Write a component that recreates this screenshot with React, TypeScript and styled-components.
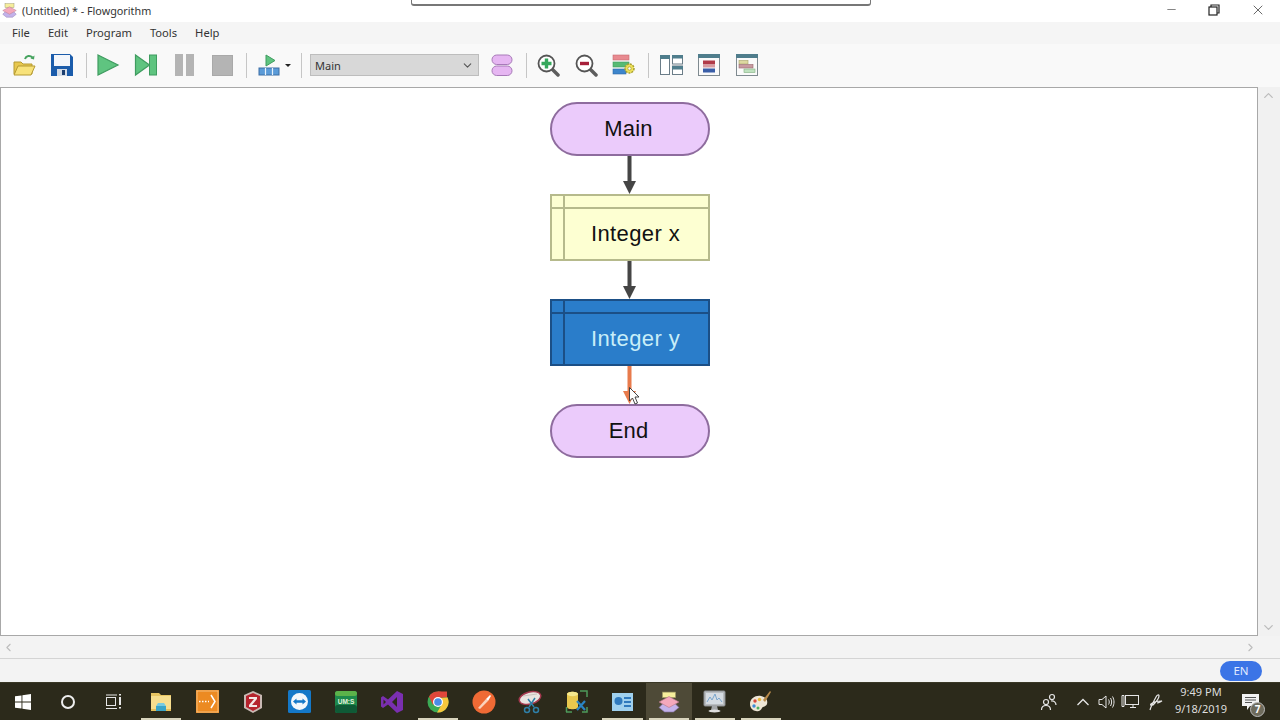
import React from "react";
import styled, { createGlobalStyle } from "styled-components";
import { ChevronDown, ChevronLeft, ChevronRight, ChevronUp, X, Minus } from "lucide-react";

const Global = createGlobalStyle`
    html, body {
        margin: 0;
        padding: 0;
        background: #fff;
    }
    * {
        box-sizing: border-box;
    }
`;

const Page = styled.div`
    position: relative;
    width: 1280px;
    height: 720px;
    overflow: hidden;
    display: flex;
    flex-direction: column;
    font-family: "Noto Sans", "Open Sans", sans-serif;
    color: #222;
`;

const TopOverlay = styled.div`
    position: absolute;
    top: -6px;
    left: 411px;
    width: 460px;
    height: 12px;
    background: #fff;
    border: 1px solid #777;
    border-bottom-width: 2px;
    border-radius: 3px;
`;

const TitleBar = styled.div`
    height: 22px;
    flex: none;
    display: flex;
    align-items: center;
    padding: 0 0 1px 2px;
    background: #fff;
`;

const TitleText = styled.span`
    margin-left: 5px;
    font-size: 10.8px;
    color: #333;
`;

const WindowControls = styled.div`
    margin-left: auto;
    display: flex;
    align-items: center;
    gap: 30px;
    padding: 0 14px 2px 0;
    color: #444;
`;

const MenuBar = styled.div`
    height: 22px;
    flex: none;
    display: flex;
    align-items: center;
    padding: 0 0 2px 12px;
    gap: 18px;
    background: #f5f5f5;
`;

const MenuItem = styled.span`
    font-size: 11.2px;
    color: #333;
`;

const Toolbar = styled.div`
    height: 43px;
    flex: none;
    display: flex;
    align-items: center;
    padding: 0 0 1px 5px;
    background: #f9f9f9;
`;

const ToolButton = styled.div<{ $w?: number }>`
    width: ${(p) => p.$w ?? 38}px;
    height: 24px;
    flex: none;
    display: flex;
    align-items: center;
    justify-content: center;
`;

const ToolSep = styled.div`
    width: 1px;
    height: 25px;
    flex: none;
    margin: 0 2px 0 5px;
    background: #c6c6c6;
`;

const Caret = styled.div`
    width: 6px;
    height: 0;
    flex: none;
    margin: 0 5px 0 -4px;
    border-left: 3px solid transparent;
    border-right: 3px solid transparent;
    border-top: 3px solid #222;
`;

const ProgramSelect = styled.div`
    width: 169px;
    height: 22px;
    flex: none;
    margin: 0 4px 0 6px;
    padding: 0 4px;
    display: flex;
    align-items: center;
    justify-content: space-between;
    background: #d8d8d8;
    border: 1px solid #bdbdbd;
    font-size: 11px;
    color: #333;
`;

const ViewGroup = styled.div`
    display: flex;
    margin-left: 1px;
`;

const Workspace = styled.div`
    height: 549px;
    flex: none;
    display: flex;
`;

const Canvas = styled.div`
    position: relative;
    flex: 1;
    background: #fff;
    border: 1px solid #a8a8a8;
    padding: 14px 0 0 549px;
`;

const Flow = styled.div`
    position: relative;
    width: 160px;
    display: flex;
    flex-direction: column;
`;

const Terminal = styled.div`
    height: 54px;
    display: flex;
    align-items: center;
    justify-content: center;
    padding-right: 3px;
    background: #ebcbfb;
    border: 2px solid #8e6c9e;
    border-radius: 27px;
    font-family: "Liberation Sans", Arial, sans-serif;
    font-size: 22px;
    letter-spacing: 0.2px;
    color: #111;
`;

const Declare = styled.div<{ $selected?: boolean }>`
    height: 67px;
    display: grid;
    grid-template-columns: 13px 1fr;
    grid-template-rows: 13px 1fr;
    background: ${(p) => (p.$selected ? "#2a7dca" : "#fdffd2")};
    border: 2px solid ${(p) => (p.$selected ? "#1b4f86" : "#b6ba8c")};
    color: ${(p) => (p.$selected ? "#c8eef8" : "#111")};
    --rule: ${(p) => (p.$selected ? "#1b4f86" : "#b6ba8c")};
    font-family: "Liberation Sans", Arial, sans-serif;
    font-size: 22px;
    letter-spacing: 0.4px;
`;

const DeclareCorner = styled.div`
    border-right: 2px solid var(--rule);
    border-bottom: 2px solid var(--rule);
`;

const DeclareTop = styled.div`
    border-bottom: 2px solid var(--rule);
`;

const DeclareSide = styled.div`
    border-right: 2px solid var(--rule);
`;

const DeclareLabel = styled.div`
    display: flex;
    align-items: center;
    justify-content: center;
    padding-right: 2px;
`;

const CursorMark = styled.svg`
    position: absolute;
    left: 79px;
    top: 285px;
`;

const VScroll = styled.div`
    width: 22px;
    flex: none;
    display: flex;
    flex-direction: column;
    justify-content: space-between;
    align-items: center;
    padding: 1px 1px 1px 0;
    background: #f1f1f1;
    color: #bcbcbc;
`;

const HScroll = styled.div`
    height: 23px;
    flex: none;
    display: flex;
    align-items: center;
    justify-content: space-between;
    padding: 0 23px 0 2px;
    background: #f3f3f3;
    border-bottom: 1px solid #d4d4d4;
    color: #bcbcbc;
`;

const StatusBar = styled.div`
    height: 23px;
    flex: none;
    display: flex;
    align-items: center;
    justify-content: flex-end;
    padding-right: 18px;
    background: #f3f3f3;
`;

const LangPill = styled.div`
    width: 42px;
    height: 20px;
    display: flex;
    align-items: center;
    justify-content: center;
    background: #3b74e6;
    border-radius: 10px;
    font-size: 11.5px;
    color: #e2ebff;
`;

const Taskbar = styled.div`
    height: 38px;
    flex: none;
    display: flex;
    align-items: stretch;
    background: #2c2a1b;
    border-top: 1px solid #3a3826;
    color: #eee;
`;

const TaskSlots = styled.div`
    width: 646px;
    margin-left: 1px;
    display: flex;
`;

const TaskSlot = styled.div<{ $w?: number; $running?: boolean; $active?: boolean }>`
    position: relative;
    flex: ${(p) => (p.$w ? `0 0 ${p.$w}px` : "1")};
    display: flex;
    align-items: center;
    justify-content: center;
    background: ${(p) => (p.$active ? "#4e4a37" : "transparent")};

    &::after {
        content: "";
        display: ${(p) => (p.$running || p.$active ? "block" : "none")};
        position: absolute;
        left: 3px;
        right: 3px;
        bottom: 0;
        height: 2px;
        background: #d8d4bd;
    }
`;

const Tray = styled.div`
    margin-left: auto;
    display: flex;
    align-items: center;
    color: #e6e6e6;
`;

const TrayIcon = styled.div<{ $w: number; $gap?: number }>`
    width: ${(p) => p.$w}px;
    margin-left: ${(p) => p.$gap ?? 0}px;
    display: flex;
    justify-content: center;
`;

const Clock = styled.div`
    width: 54px;
    margin: -3px 0 0 4px;
    display: flex;
    flex-direction: column;
    align-items: center;
    gap: 2px;
    font-size: 11px;
    line-height: 15px;
    white-space: nowrap;
    color: #dedede;
`;

const Badge = styled.div`
    position: absolute;
    right: -6px;
    bottom: -7px;
    width: 15px;
    height: 15px;
    display: flex;
    align-items: center;
    justify-content: center;
    background: #6e6b5c;
    border: 1px solid #bbb;
    border-radius: 50%;
    font-size: 10px;
    font-weight: 700;
    color: #fff;
`;

const Notify = styled.div`
    position: relative;
    margin: 0 21px 0 14px;
    display: flex;
`;

const Connector = ({ color }: { color: string }) => (
    <svg width="160" height="38" viewBox="0 0 160 38" style={{ display: "block" }}>
        <rect x="77.5" y="0" width="4" height="26" fill={color} />
        <path d="M73 25h13l-6.500 13z" fill={color} />
    </svg>
);

const FolderIcon = () => (
    <svg width="26" height="24" viewBox="0 0 26 24">
        <path d="M14 6c1-3.500 5-4 7.500-1.500" fill="none" stroke="#46a35f" strokeWidth="2" />
        <path d="M23.500 2.500l-.5 4-3.500-1z" fill="#46a35f" />
        <path d="M3 21V9h7l2 2h9v10z" fill="#e8c84f" stroke="#b59a32" />
        <path d="M3 22l4-9h17l-4 9z" fill="#f8e27a" stroke="#b59a32" />
    </svg>
);

const SaveIcon = () => (
    <svg width="24" height="24" viewBox="0 0 24 24">
        <path d="M1 1h19l3 3v19H1z" fill="#1b5cab" />
        <rect x="4" y="2" width="16" height="11" fill="#f3f6fb" />
        <rect x="7" y="16" width="10" height="7" fill="#d5dce6" />
        <rect x="12" y="17" width="3" height="5" fill="#1c3f70" />
    </svg>
);

const PlayIcon = () => (
    <svg width="24" height="24" viewBox="0 0 24 24">
        <path d="M2 2l20 10L2 22z" fill="#5fc480" stroke="#3f9c60" strokeWidth="1.200" />
    </svg>
);

const StepIcon = () => (
    <svg width="24" height="24" viewBox="0 0 24 24">
        <path d="M1.500 2l14 10-14 10z" fill="#5fc480" stroke="#3f9c60" strokeWidth="1.200" />
        <rect x="15.500" y="2" width="7" height="20" fill="#5fc480" stroke="#3f9c60" />
    </svg>
);

const PauseIcon = () => (
    <svg width="20" height="22" viewBox="0 0 20 22">
        <rect x="1" y="0" width="8" height="22" fill="#b4b4b4" />
        <rect x="12" y="0" width="8" height="22" fill="#b4b4b4" />
    </svg>
);

const StopIcon = () => (
    <svg width="21" height="21" viewBox="0 0 21 21">
        <rect x="0.500" y="0.500" width="20" height="20" fill="#b4b4b4" stroke="#a9a9a9" />
    </svg>
);

const RunLayoutIcon = () => (
    <svg width="22" height="22" viewBox="0 0 22 22">
        <path d="M8 1l9 5.500L8 12z" fill="#5fc480" stroke="#3f9c60" />
        <rect x="1" y="14" width="20" height="7" fill="#5b9bd8" stroke="#3c6ea5" />
        <path d="M7.500 14v7M14.500 14v7" stroke="#e8f2fb" strokeWidth="1.200" />
    </svg>
);

const PillsIcon = () => (
    <svg width="22" height="22" viewBox="0 0 22 22">
        <rect x="1" y="1" width="20" height="9.500" rx="4.700" fill="#e6b6f2" stroke="#a77ab8" />
        <rect x="1" y="12" width="20" height="9.500" rx="4.700" fill="#e6b6f2" stroke="#a77ab8" />
    </svg>
);

const ZoomIcon = ({ plus }: { plus?: boolean }) => (
    <svg width="23" height="23" viewBox="0 0 23 23">
        <path d="M14 14l7 7" stroke="#5d5d5d" strokeWidth="3.500" strokeLinecap="round" />
        <circle cx="9.500" cy="9.500" r="8" fill="#fff" stroke="#555" strokeWidth="1.800" />
        {plus ? (
            <path d="M9.500 4.500v10M4.500 9.500h10" stroke="#35a85c" strokeWidth="3.400" />
        ) : (
            <path d="M5 9.500h9" stroke="#a8203a" strokeWidth="3.400" />
        )}
    </svg>
);

const StyleIcon = () => (
    <svg width="24" height="22" viewBox="0 0 24 22">
        <rect x="1" y="1" width="16" height="5" fill="#e88a90" stroke="#c56a70" strokeWidth="0.600" />
        <rect x="1" y="8" width="16" height="5" fill="#58ba74" stroke="#3f9c60" strokeWidth="0.600" />
        <rect x="1" y="15" width="13" height="5" fill="#3d86cc" stroke="#2f6aa5" strokeWidth="0.600" />
        <circle cx="17.500" cy="14.500" r="4.500" fill="#f0e35a" stroke="#a8a030" strokeWidth="1.500" strokeDasharray="2 1" />
        <circle cx="17.500" cy="14.500" r="1.700" fill="#fff" stroke="#a8a030" strokeWidth="0.800" />
    </svg>
);

const PanelsIcon = () => (
    <svg width="23" height="20" viewBox="0 0 23 20">
        <rect x="0.500" y="0.500" width="9" height="19" fill="#fff" stroke="#6b7d88" />
        <rect x="0" y="0" width="10" height="4" fill="#4f7d8c" />
        <rect x="12.500" y="0.500" width="10" height="8.500" fill="#fff" stroke="#6b7d88" />
        <rect x="12" y="0" width="11" height="3.500" fill="#4f7d8c" />
        <rect x="12.500" y="11" width="10" height="8.500" fill="#fff" stroke="#6b7d88" />
        <rect x="12" y="11" width="11" height="3.500" fill="#4f7d8c" />
    </svg>
);

const StackWinIcon = () => (
    <svg width="22" height="22" viewBox="0 0 22 22">
        <rect x="0.500" y="0.500" width="21" height="21" fill="#fafafa" stroke="#7f8a90" />
        <rect x="0" y="0" width="22" height="4" fill="#4f7d8c" />
        <rect x="5" y="6.500" width="12" height="4" fill="#b03a48" />
        <rect x="5" y="11" width="12" height="2.500" fill="#d89aa0" />
        <rect x="5" y="14.500" width="12" height="4" fill="#3a5ea8" />
    </svg>
);

const GanttWinIcon = () => (
    <svg width="22" height="22" viewBox="0 0 22 22">
        <rect x="0.500" y="0.500" width="21" height="21" fill="#fafafa" stroke="#7f8a90" />
        <rect x="0" y="0" width="22" height="4" fill="#4f7d8c" />
        <rect x="3" y="6.500" width="9" height="3.500" fill="#ddd8a0" stroke="#a8a46a" strokeWidth="0.600" />
        <rect x="3" y="10.500" width="14" height="3.500" fill="#c89aa0" stroke="#9a6a70" strokeWidth="0.600" />
        <rect x="8" y="15" width="11" height="3.500" fill="#bfe2bf" stroke="#7fae7f" strokeWidth="0.600" />
    </svg>
);

// little stacked-shapes mark of the app, title bar and taskbar
const AppMark = ({ size }: { size: number }) => (
    <svg width={size} height={size} viewBox="0 0 20 20">
        <rect x="4" y="1" width="12" height="5" fill="#f6ee9c" stroke="#9a9460" strokeWidth="0.600" />
        <path d="M1 15l5-5h8l5 5-5 4H6z" fill="#c3b2ea" stroke="#8d7cb0" strokeWidth="0.600" />
        <path d="M10 5l9 5-9 5-9-5z" fill="#f4a8bc" stroke="#b87a8c" strokeWidth="0.600" />
    </svg>
);

const WinLogo = () => (
    <svg width="16" height="16" viewBox="0 0 16 16">
        <path d="M0 2.300L6.500 1.400v6.200H0zM7.400 1.300L16 0v7.600H7.400zM0 8.500h6.500v6.100L0 13.700zM7.400 8.500H16V16l-8.600-1.200z" fill="#fff" />
    </svg>
);

const CortanaRing = () => (
    <svg width="16" height="16" viewBox="0 0 16 16">
        <circle cx="8" cy="8" r="6" fill="none" stroke="#eee" strokeWidth="2" />
    </svg>
);

const TaskViewIcon = () => (
    <svg width="18" height="16" viewBox="0 0 18 16" fill="none" stroke="#e6e6e6">
        <rect x="1.500" y="3.500" width="9" height="8" />
        <path d="M1 1h11M1 14.500h11" />
        <path d="M15 3v8" strokeWidth="2" />
        <path d="M15 0v1.500M15 13v1.500" strokeWidth="2" />
    </svg>
);

const ExplorerIcon = () => (
    <svg width="22" height="20" viewBox="0 0 22 20">
        <path d="M1 1h8l2 2h10v4H1z" fill="#e8c562" />
        <rect x="1" y="4" width="20" height="15" fill="#f7de8e" />
        <rect x="1" y="17" width="20" height="2" fill="#e3bf5c" />
        <path d="M6 14h10v5H6z" fill="#3aa5c8" />
        <path d="M8 11h6l2 3H6z" fill="#78cbe0" />
    </svg>
);

const OrangeIcon = () => (
    <svg width="23" height="23" viewBox="0 0 23 23">
        <rect width="23" height="23" fill="#ec8a22" />
        <rect x="1" y="1" width="21" height="21" fill="none" stroke="#f7c98e" strokeWidth="0.800" />
        <path d="M3 11.500h10" stroke="#fff" strokeWidth="1.500" strokeDasharray="1.500 1.500" />
        <path d="M15 5l4 6.500-4 6.500" stroke="#fff" strokeWidth="1.500" fill="none" />
    </svg>
);

const ZipIcon = () => (
    <svg width="20" height="22" viewBox="0 0 20 22">
        <path d="M10 0l9 4v13l-9 5-9-5V4z" fill="#c9b9b4" />
        <path d="M10 2l7 3v11l-7 4-7-4V5z" fill="#b5232d" />
        <path d="M6 6h8v2l-5 6h5v2H6v-2l5-6H6z" fill="#f3e6e6" />
    </svg>
);

const TeamViewerIcon = () => (
    <svg width="23" height="23" viewBox="0 0 23 23">
        <rect width="23" height="23" rx="1.500" fill="#1478c8" />
        <circle cx="11.500" cy="11.500" r="8.500" fill="#f2f7fb" />
        <path d="M5 11.500l3.500-3v1.800h6V8.500l3.500 3-3.500 3v-1.800h-6v1.800z" fill="#1478c8" />
    </svg>
);

const UmsIcon = () => (
    <svg width="22" height="22" viewBox="0 0 22 22">
        <rect width="22" height="22" rx="2.500" fill="#1f8a4c" />
        <rect y="14" width="22" height="8" rx="2.500" fill="#0f5a36" />
        <rect width="22" height="5" rx="2.500" fill="#5cb24a" />
        <text x="11" y="13" textAnchor="middle" fontSize="6.500" fontWeight="700" fontFamily="Liberation Sans, sans-serif" fill="#e6f3dd">UM:S</text>
    </svg>
);

const StudioIcon = () => (
    <svg width="24" height="24" viewBox="0 0 24 24">
        <path d="M17 1l6 3v16l-6 3-9-8.500L3 18l-2-1.500v-9L3 6l5 3.500z" fill="#7a2fb0" />
        <path d="M17 7l-5 5 5 5z" fill="#2c2a1b" />
        <path d="M3.500 9.500l2.500 2.500-2.500 2.500z" fill="#2c2a1b" />
    </svg>
);

const ChromeIcon = () => (
    <svg width="22" height="22" viewBox="0 0 22 22">
        <circle cx="11" cy="11" r="10.500" fill="#3bab55" />
        <path d="M11 .500A10.500 10.500 0 0 1 20.100 5.700L11 7z" fill="#e0463a" />
        <path d="M2 5.500A10.500 10.500 0 0 1 11 .500h9v6H11L6 14z" fill="#e0463a" />
        <path d="M20.500 6.500A10.500 10.500 0 0 1 10 21.500L15 13l-1-6z" fill="#f6c63c" />
        <circle cx="11" cy="11" r="5" fill="#fff" />
        <circle cx="11" cy="11" r="3.800" fill="#4a8de8" />
    </svg>
);

const PostmanIcon = () => (
    <svg width="24" height="24" viewBox="0 0 24 24">
        <circle cx="12" cy="12" r="11.500" fill="#ef6a35" />
        <path d="M6 18l8-9 2 2-8 8z" fill="#fbd2bc" />
        <path d="M14 9l4-4 1 1-3 5z" fill="#fff" />
    </svg>
);

const SnipIcon = () => (
    <svg width="24" height="24" viewBox="0 0 24 24">
        <ellipse cx="12" cy="8" rx="11" ry="6" transform="rotate(-15 12 8)" fill="#e8e4e0" stroke="#a3384e" strokeWidth="1.500" />
        <path d="M5 6l14-2" stroke="#c9c3bd" />
        <path d="M10 9l6 8M17 8l-6 9" stroke="#2f7fa8" strokeWidth="1.500" />
        <circle cx="9" cy="20" r="2.500" fill="none" stroke="#2f7fa8" strokeWidth="1.500" />
        <circle cx="18" cy="20" r="2.500" fill="none" stroke="#2f7fa8" strokeWidth="1.500" />
    </svg>
);

const DbToolIcon = () => (
    <svg width="23" height="23" viewBox="0 0 23 23">
        <path d="M2 4c0-3 11-3 11 0v13c0 3-11 3-11 0z" fill="#e9c84e" />
        <ellipse cx="7.500" cy="4" rx="5.500" ry="2.200" fill="#f6e88e" />
        <path d="M15 1h7v6M1 22h6M1.500 17v5" fill="none" stroke="#4d9a5b" strokeWidth="1.500" />
        <path d="M12 11l8 9M20 11l-8 9" stroke="#2a84c4" strokeWidth="2.200" />
        <path d="M22 17v5h-5" fill="none" stroke="#4d9a5b" strokeWidth="1.500" />
    </svg>
);

const PanelAppIcon = () => (
    <svg width="21" height="18" viewBox="0 0 21 18">
        <rect width="21" height="18" fill="#9fd0ee" />
        <circle cx="6.500" cy="8" r="4" fill="#2f79bd" />
        <rect x="12" y="4" width="7" height="2" fill="#2f79bd" />
        <rect x="12" y="8" width="7" height="2" fill="#2f79bd" />
        <rect x="12" y="12" width="7" height="2" fill="#2f79bd" />
    </svg>
);

const MonitorIcon = () => (
    <svg width="23" height="23" viewBox="0 0 23 23">
        <rect x="1" y="1" width="21" height="15" rx="1" fill="#b9bdc0" stroke="#8a8d90" />
        <rect x="3" y="3" width="17" height="11" fill="#d6dce2" />
        <path d="M4 12l3-5 2 3 3-6 2 6 2-2 3 4" fill="none" stroke="#7aa6cc" />
        <path d="M9 16h5l1 4H8z" fill="#a5a7a9" />
        <ellipse cx="11.500" cy="21" rx="6" ry="1.500" fill="#ddd" />
    </svg>
);

const PaletteIcon = () => (
    <svg width="23" height="23" viewBox="0 0 23 23">
        <path d="M1 14c0-6 6-9 11-8 5 1 7 4 6 8-1 3-4 2-5 4-1 2-3 4-6 3-3 0-6-3-6-7z" fill="#eee6d6" />
        <path d="M14 10l7-9 1 1-6 10z" fill="#b98a4a" />
        <circle cx="6" cy="11" r="1.700" fill="#d8483c" />
        <circle cx="10.500" cy="9.500" r="1.700" fill="#e8b83c" />
        <circle cx="5" cy="16" r="1.700" fill="#3c8cd8" />
        <circle cx="9" cy="18" r="1.500" fill="#4cb060" />
    </svg>
);

const PeopleIcon = () => (
    <svg width="18" height="18" viewBox="0 0 18 18" fill="none" stroke="#e6e6e6" strokeWidth="1.200">
        <circle cx="6" cy="9" r="2.500" />
        <path d="M1.500 17c0-3 2-4.500 4.500-4.500s4.500 1.500 4.500 4.500" />
        <circle cx="12" cy="4" r="2.500" />
        <path d="M11 8c3-.5 5 1.500 5 4" />
    </svg>
);

const TrayChevron = () => (
    <svg width="14" height="10" viewBox="0 0 14 10" fill="none" stroke="#e6e6e6" strokeWidth="1.300">
        <path d="M1.500 8L7 2.500 12.500 8" />
    </svg>
);

const VolumeIcon = () => (
    <svg width="17" height="16" viewBox="0 0 17 16" fill="none" stroke="#e6e6e6">
        <path d="M1 5.500h3L8 2v12L4 10.500H1z" />
        <path d="M10.500 5.500c1 1.500 1 3.500 0 5M12.500 4c1.500 2.500 1.500 5.500 0 8M14.500 2.500c2 3.500 2 7.500 0 11" />
    </svg>
);

const NetworkIcon = () => (
    <svg width="18" height="16" viewBox="0 0 18 16" fill="none" stroke="#e6e6e6">
        <rect x="4.500" y="1.500" width="13" height="9" />
        <path d="M1 1.500h2v11H1zM9 13.500h6M12 10.500v3" />
    </svg>
);

const PenIcon = () => (
    <svg width="16" height="18" viewBox="0 0 16 18" fill="none" stroke="#e6e6e6" strokeWidth="1.200">
        <path d="M2 17c1-4 4-9 6-13 1-2 3-3 3-1 0 3-4 7-6 9-2 1-3 0-2-1 2-2 7-3 11-3-2 1-3 2-5 2" />
    </svg>
);

const ChatIcon = () => (
    <svg width="17" height="16" viewBox="0 0 17 16">
        <path d="M0 0h17v12H8l-3 4v-4H0z" fill="#f2f2f2" />
        <path d="M3 3.500h11M3 6h11M3 8.500h7" stroke="#555" />
    </svg>
);

const menus = ["File", "Edit", "Program", "Tools", "Help"];

const taskIcons: { icon: React.ReactNode; running?: boolean; active?: boolean }[] = [
    { icon: <ExplorerIcon />, running: true },
    { icon: <OrangeIcon /> },
    { icon: <ZipIcon /> },
    { icon: <TeamViewerIcon /> },
    { icon: <UmsIcon /> },
    { icon: <StudioIcon /> },
    { icon: <ChromeIcon />, running: true },
    { icon: <PostmanIcon /> },
    { icon: <SnipIcon /> },
    { icon: <DbToolIcon /> },
    { icon: <PanelAppIcon />, running: true },
    { icon: <AppMark size={22} />, active: true },
    { icon: <MonitorIcon />, running: true },
    { icon: <PaletteIcon />, running: true },
];

export default function App() {
    return (
        <Page>
            <Global />
            <TitleBar>
                <AppMark size={15} />
                <TitleText>(Untitled) * - Flowgorithm</TitleText>
                <WindowControls>
                    <Minus size={13} strokeWidth={1.2} />
                    <svg width="12" height="12" viewBox="0 0 12 12" fill="none" stroke="#222" strokeWidth="1.200">
                        <rect x="1" y="3" width="8" height="8" />
                        <path d="M3 3V1h8v8H9" />
                    </svg>
                    <X size={16} strokeWidth={1.2} />
                </WindowControls>
            </TitleBar>
            <TopOverlay />
            <MenuBar>
                {menus.map((m) => (
                    <MenuItem key={m}>{m}</MenuItem>
                ))}
            </MenuBar>
            <Toolbar>
                <ToolButton><FolderIcon /></ToolButton>
                <ToolButton><SaveIcon /></ToolButton>
                <ToolSep />
                <ToolButton><PlayIcon /></ToolButton>
                <ToolButton><StepIcon /></ToolButton>
                <ToolButton><PauseIcon /></ToolButton>
                <ToolButton><StopIcon /></ToolButton>
                <ToolSep />
                <ToolButton $w={40}><RunLayoutIcon /></ToolButton>
                <Caret />
                <ToolSep />
                <ProgramSelect>
                    Main
                    <ChevronDown size={13} color="#555" />
                </ProgramSelect>
                <ToolButton><PillsIcon /></ToolButton>
                <ToolSep />
                <ToolButton><ZoomIcon plus /></ToolButton>
                <ToolButton><ZoomIcon /></ToolButton>
                <ToolButton><StyleIcon /></ToolButton>
                <ToolSep />
                <ViewGroup>
                    <ToolButton><PanelsIcon /></ToolButton>
                    <ToolButton><StackWinIcon /></ToolButton>
                    <ToolButton><GanttWinIcon /></ToolButton>
                </ViewGroup>
            </Toolbar>
            <Workspace>
                <Canvas>
                    <Flow>
                        <Terminal>Main</Terminal>
                        <Connector color="#454545" />
                        <Declare>
                            <DeclareCorner />
                            <DeclareTop />
                            <DeclareSide />
                            <DeclareLabel>Integer x</DeclareLabel>
                        </Declare>
                        <Connector color="#454545" />
                        <Declare $selected>
                            <DeclareCorner />
                            <DeclareTop />
                            <DeclareSide />
                            <DeclareLabel>Integer y</DeclareLabel>
                        </Declare>
                        <Connector color="#e87b4c" />
                        <Terminal>End</Terminal>
                        <CursorMark width="11" height="18" viewBox="0 0 11 18">
                            <path d="M.500.500v13.500l3-3 2.500 6 2.500-1-2.500-6H10z" fill="#fff" stroke="#333" strokeWidth="0.900" />
                        </CursorMark>
                    </Flow>
                </Canvas>
                <VScroll>
                    <ChevronUp size={15} />
                    <ChevronDown size={15} />
                </VScroll>
            </Workspace>
            <HScroll>
                <ChevronLeft size={13} />
                <ChevronRight size={13} />
            </HScroll>
            <StatusBar>
                <LangPill>EN</LangPill>
            </StatusBar>
            <Taskbar>
                <TaskSlot $w={45}><WinLogo /></TaskSlot>
                <TaskSlot $w={46}><CortanaRing /></TaskSlot>
                <TaskSlot $w={46}><TaskViewIcon /></TaskSlot>
                <TaskSlots>
                    {taskIcons.map((t, i) => (
                        <TaskSlot key={i} $running={t.running} $active={t.active}>
                            {t.icon}
                        </TaskSlot>
                    ))}
                </TaskSlots>
                <Tray>
                    <TrayIcon $w={24}><PeopleIcon /></TrayIcon>
                    <TrayIcon $w={22} $gap={11}><TrayChevron /></TrayIcon>
                    <TrayIcon $w={24}><VolumeIcon /></TrayIcon>
                    <TrayIcon $w={24}><NetworkIcon /></TrayIcon>
                    <TrayIcon $w={28}><PenIcon /></TrayIcon>
                    <Clock>
                        <span>9:49 PM</span>
                        <span>9/18/2019</span>
                    </Clock>
                    <Notify>
                        <ChatIcon />
                        <Badge>7</Badge>
                    </Notify>
                </Tray>
            </Taskbar>
        </Page>
    );
}
